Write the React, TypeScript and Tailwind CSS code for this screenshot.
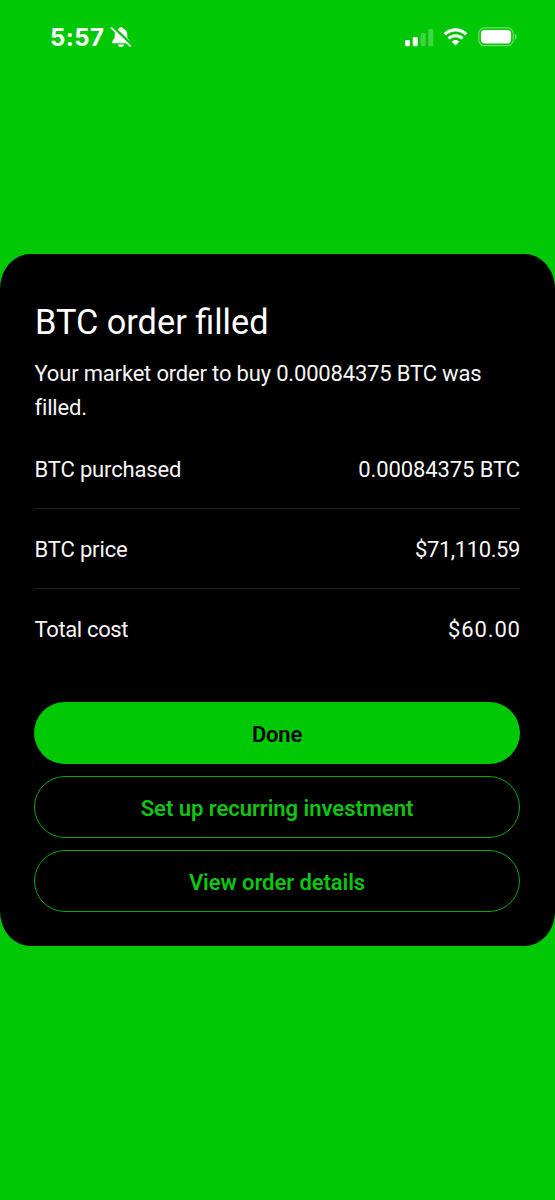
const rows = [
  { label: "BTC purchased", value: "0.00084375 BTC", labelSpacing: "tracking-[-0.15px]", valueSpacing: "tracking-[-0.1px]" },
  { label: "BTC price", value: "$71,110.59", labelSpacing: "tracking-[-0.15px]", valueSpacing: "tracking-[-0.4px]" },
  { label: "Total cost", value: "$60.00", labelSpacing: "tracking-[-0.35px]", valueSpacing: "tracking-[0.85px] -mr-[0.85px]" },
];

const StatusBar = () => {
  return (
    <header className="flex h-[74px] items-center justify-between pl-[50px] pr-[37px] text-white">
      <div className="flex items-center gap-[6px]">
        <span className="mt-px font-['Inter',sans-serif] text-[24px] leading-none font-bold tracking-[0.4px]">5:57</span>
        <svg width="22" height="22" viewBox="0 0 22 22" fill="none">
          <path d="M11 1C10 1 9.3 1.6 9.2 2.4C6.2 3.2 4.7 5.6 4.7 8.7V11.6C4.7 13 2.2 14.3 2.2 16.2C2.2 16.9 2.7 17.2 3.5 17.2H18.5C19.3 17.2 19.8 16.9 19.8 16.2C19.8 14.3 17.3 13 17.3 11.6V8.7C17.3 5.6 15.8 3.2 12.8 2.4C12.7 1.6 12 1 11 1Z" fill="currentColor" />
          <path d="M8 18.4H14C13.7 20 12.5 21 11 21S8.3 20 8 18.4Z" fill="currentColor" />
          <path d="M2.4 0.8L21.2 19" stroke="#00c805" strokeWidth="3.4" />
          <path d="M1.4 1.8L20.4 20.2" stroke="currentColor" strokeWidth="1.7" strokeLinecap="round" />
        </svg>
      </div>

      <div className="flex items-center">
        <svg width="29" height="19" viewBox="0 0 29 19" fill="currentColor">
          <rect x="0" y="12" width="5" height="6.3" rx="1.4" />
          <rect x="7.8" y="9" width="5" height="9.3" rx="1.4" />
          <rect x="15.6" y="5" width="5" height="13.3" rx="1.4" opacity="0.25" />
          <rect x="23.3" y="1" width="5" height="17.3" rx="1.4" opacity="0.25" />
        </svg>
        <svg className="ml-[9px]" width="25" height="18" viewBox="0 0 25 18" fill="none" stroke="currentColor">
          <path d="M1.8 6.3C7.6 0.5 17.4 0.5 23.2 6.3" strokeWidth="3.2" />
          <path d="M5.6 10.6C9.4 6.8 15.6 6.8 19.4 10.6" strokeWidth="3.1" />
          <path d="M8.6 13.6C10.9 11.5 14.1 11.5 16.4 13.6L12.5 17.5Z" fill="currentColor" stroke="none" />
        </svg>
        <svg className="ml-[10px]" width="40" height="20" viewBox="0 0 40 20" fill="none">
          <rect x="0.8" y="0.8" width="34.4" height="17.9" rx="5.8" stroke="white" strokeOpacity="0.42" strokeWidth="1.2" />
          <rect x="2.9" y="2.9" width="30.2" height="13.7" rx="4" fill="white" />
          <path d="M36.8 6.8C39.1 7.7 39.1 11.8 36.8 12.7Z" fill="white" fillOpacity="0.5" />
        </svg>
      </div>
    </header>
  );
};

const App = () => {
  return (
    <div className="flex h-[1200px] w-[555px] flex-col overflow-hidden bg-[#00c805] font-['Roboto',sans-serif]">
      <StatusBar />

      <main className="mt-[180px] flex h-[692px] flex-col rounded-[30px/35px] bg-black pr-[35px] pl-[34px] pt-[48px] text-[22px] text-[#f7f7f7]">
        <h1 className="h-[40px] pl-px text-[34.3px] leading-[40px] whitespace-nowrap text-white">BTC order filled</h1>
        <p className="mt-[15px] pl-[0.5px] leading-[34px] tracking-[-0.18px] whitespace-nowrap">
          Your market order to buy 0.00084375 BTC was
          <br />
          filled.
        </p>

        <div className="mt-[4px] divide-y divide-[#1e1e1e]">
          {rows.map((row) => (
            <div key={row.label} className="flex h-[80px] items-center justify-between pt-px pl-[0.5px] last:pt-0">
              <span className={row.labelSpacing}>{row.label}</span>
              <span className={row.valueSpacing}>{row.value}</span>
            </div>
          ))}
        </div>

        <div className="mt-[33px] flex flex-col gap-[12px] font-semibold">
          <button className="h-[62px] rounded-full bg-[#00c805] pt-[2px] tracking-[-0.2px] text-black">Done</button>
          <button className="h-[62px] rounded-full border border-[#08a80c] pt-[2px] tracking-[-0.03px] text-[#0fc512]">Set up recurring investment</button>
          <button className="h-[62px] rounded-full border border-[#08a80c] pt-[2px] tracking-[-0.07px] text-[#0fc512]">View order details</button>
        </div>
      </main>
    </div>
  );
};

export default App;
